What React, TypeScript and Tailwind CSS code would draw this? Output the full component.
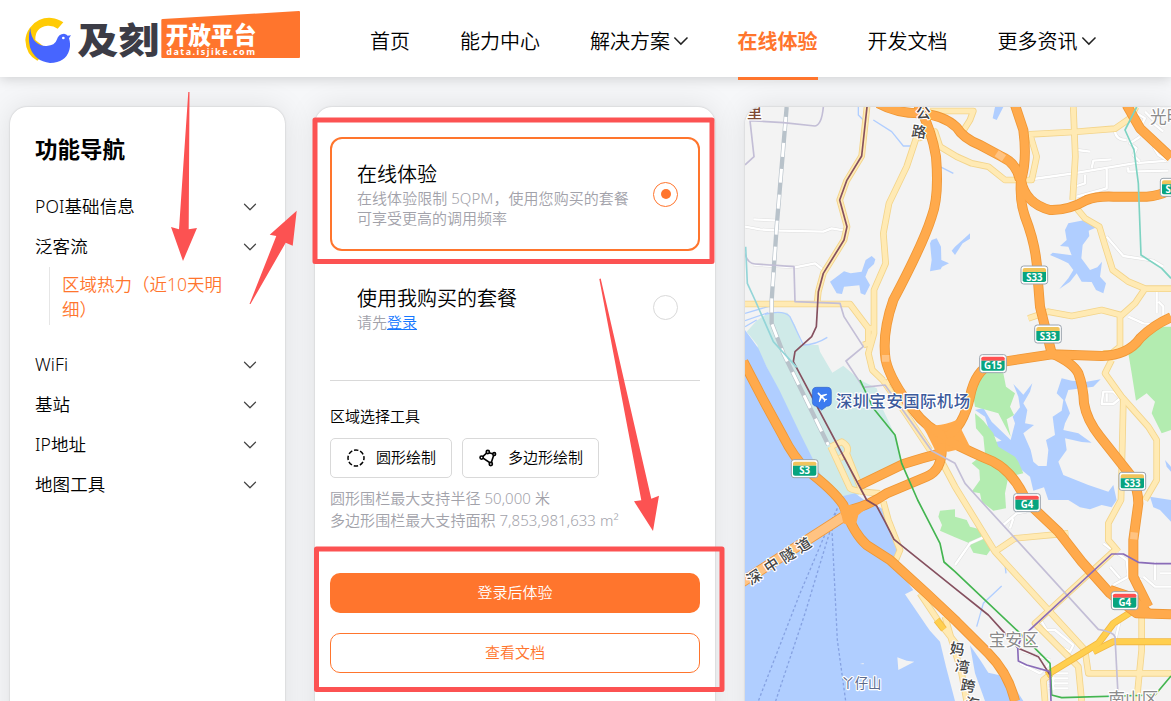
import { ChevronDown } from "lucide-react";

const NAV_ITEMS = [
  { label: "首页" },
  { label: "能力中心" },
  { label: "解决方案", menu: true },
  { label: "在线体验", active: true },
  { label: "开发文档" },
  { label: "更多资讯", menu: true },
];

const SIDE_ITEMS = [
  { label: "POI基础信息" },
  { label: "泛客流", child: "区域热力（近10天明细）" },
  { label: "WiFi" },
  { label: "基站" },
  { label: "IP地址" },
  { label: "地图工具" },
];

const WATER = [
  "M15 690L55 745L80 800L118 870L180 1000L250 1140L300 1190L345 1180L380 1205L425 1225L445 1280L472 1335L476 1365L460 1390L520 1470L495 1483L560 1578L570 1592L600 1625L618 1700L645 1803H15Z",
  "M690 1636L722 1682L745 1718L790 1728L835 1780L850 1803H735L705 1720Z",
  "M270 545L312 514L332 520L365 515L377 480L395 468L406 478L402 492L385 508L376 530L390 555L375 585L362 580L358 556L312 560L306 582L290 580Z",
  "M570 430L575 420L590 415L603 440L604 480L627 490L606 500L602 508L570 514L575 480Z",
  "M645 440L690 400L690 416L668 430L645 465L635 452Z",
  "M765 21H790L770 60L758 55Z",
  "M985 370L1035 360L1073 380L1046 392L1048 408L1028 435L1024 475L1050 510L1072 502L1086 485L1080 530L1098 550L1090 580L1068 570L1055 546L1025 545L1010 520L990 545L958 567L985 535L1000 510L985 490L960 478L930 465L938 458L995 466L985 440L960 438L980 420L975 390Z",
  "M705 930L730 924L755 965L812 1020L825 970L818 950L840 922L835 890L820 852L850 884L877 850L870 875L850 910L862 930L855 970L882 975L850 1000L872 1050L880 1085L895 1098L920 1098L925 1050L918 1020L945 1005L938 950L965 932L970 900L950 880L965 835L995 842L1040 845L1082 838L1060 860L985 870L975 900L990 940L975 970L970 990L1015 1000L1055 1028L1025 1026L975 1015L980 1050L955 1085L970 1125L1045 1155L1105 1175L1120 1155L1130 1200L1115 1222L1085 1215L1050 1228L1020 1222L985 1200L925 1200L912 1162L880 1172L870 1130L845 1110L815 1075L770 1045L750 1030L785 1022L750 1000L735 950Z",
  "M1230 1190L1293 1200V1265L1260 1230L1240 1222Z",
  "M1275 1080L1293 1100V1115L1280 1100Z",
];

const PARKS = [
  "M710 850L735 815L790 820L798 860L825 880L810 920L822 945L800 958L812 1010L775 940L748 932L705 920L700 890Z",
  "M705 940L730 962L760 1000L775 1040L825 1070L835 1085L850 1120L805 1130L795 1180L798 1225L760 1232L725 1205L720 1180L695 1175L720 1140L718 1110L695 1090L735 1060L730 1010L708 985Z",
  "M1293 680H1245L1205 705L1165 760L1175 820L1188 902L1220 880L1245 905L1235 940L1265 1000L1293 990Z",
  "M600 1232L645 1228L645 1250L680 1260L690 1280L720 1288L725 1310L755 1345L740 1366L700 1358L685 1328L645 1312L600 1292L606 1275L595 1250Z",
];

const LOCAL_ROADS = [
  "M40 358L115 362M15 380L60 388L120 392L250 395L275 385L315 392M40 494L165 502L225 490L250 510",
  "M880 237L1000 220L1180 190L1285 182M1012 150L1050 155M1055 205L1060 182L1115 178M1100 205V265L1010 290M1035 225V250L1010 258M1125 90Q1125 120 1160 120M1160 205H1165V215L1285 212",
  "M1200 110L1170 130L1190 145L1180 165L1200 185M1240 140L1255 165L1285 182M1190 40L1215 55L1205 75M1255 45L1240 70L1270 95M1215 35L1240 60",
  "M1100 410L1150 468L1240 482L1270 500M1250 570V640M1165 650L1210 670L1240 672M1255 605L1270 620V645",
  "M1090 875H1120L1140 895L1120 912H1085ZM1100 880V905",
  "M645 1395L690 1330L735 1310M790 1275L830 1240L860 1235M810 1285L820 1255",
  "M905 1565L920 1590L945 1590L1000 1635L990 1655L960 1640L930 1605M925 1720H985M925 1735H985M925 1750H985M925 1765H985M940 1700V1770",
  "M1090 1330L1110 1345L1160 1380L1165 1430L1120 1455M1110 1400L1140 1435M1245 1385V1440M1210 1430L1245 1460H1293M1260 1420H1293M1160 1420L1205 1440",
  "M850 1655L930 1680M840 1690L900 1720L930 1690M1140 1560L1125 1625M1000 1680L1020 1660",
];

const YELLOW_ROADS = [
  "M381 21L365 168L320 242L299 300L321 380L312 420L250 520L235 575L231 612",
  "M530 110L500 200L447 310L430 400L437 490L402 570V700L385 760L397 810L430 842",
  "M535 115L585 95L600 140L650 170L695 190L745 200L795 240L875 240L890 170L870 103L1000 96L1125 86L1170 55L1188 21",
  "M570 33H700L690 60L665 100",
  "M1000 21L1006 170L998 300",
  "M1010 325L1035 355L1078 380L1093 430L1118 510L1165 545L1215 566H1293",
  "M1215 566L1185 610L1145 646L1085 630L995 648L925 635L865 655",
  "M1140 650V740L1115 760H1090",
  "M1115 780L1095 820L1145 890L1225 980L1250 1020V1140L1215 1200",
  "M1150 900L1143 1200L1105 1270V1320L1135 1355",
  "M1125 1350L885 1570L1015 1700L1025 1803",
  "M600 1075L645 1160L765 1355L925 1530L1035 1650L1045 1720H1293",
  "M765 1355L825 1315L985 1300",
  "M1205 1530V1650L1190 1803",
  "M915 1803L910 1740L935 1720",
  "M15 612H330L385 685V730L370 735M380 685H402",
  "M430 842L500 945L570 1050M470 830L440 850",
  "M272 1040L305 1025Q330 1040 320 1060L300 1075M272 1040L330 1165Q345 1175 420 1180M320 1060L362 1165",
  "M430 1205L445 1260L480 1350L463 1390",
  "M540 1480L600 1570L655 1640M615 1550L635 1620L665 1720L680 1803",
];

const GOLD_ROADS = [
  "M920 1725L1075 1630L1120 1570L1175 1535",
  "M1060 1655L1120 1625H1293",
  "M590 1560L612 1588",
];

const HIGHWAYS = [
  "M415 10Q470 40 540 40Q610 45 650 82Q670 115 720 135L785 170Q830 190 840 240",
  "M535 15Q575 90 588 170Q598 290 575 350Q550 430 460 600Q425 700 437 780Q450 840 520 930Q560 985 620 1010",
  "M620 1010Q670 980 690 890Q705 810 759 790L935 763L1085 768Q1165 765 1200 715Q1240 675 1293 652",
  "M825 15L850 90Q862 180 843 240Q838 300 855 350Q890 440 892 520L900 620L935 760Q1000 790 1015 820Q1030 860 1032 910Q1040 960 1080 1010L1175 1130Q1195 1170 1195 1210L1180 1320V1430L1225 1520",
  "M843 240Q855 310 930 330Q985 332 1040 300Q1070 288 1120 290H1220Q1260 288 1293 268",
  "M1160 15L1200 85L1293 172",
  "M620 1020Q700 1060 760 1085Q820 1115 860 1205L955 1295L1025 1385L1110 1480L1190 1540L1293 1543",
  "M10 785L70 900L130 1010Q160 1070 200 1110Q280 1170 310 1215Q340 1300 380 1335L450 1380L560 1480L650 1565L745 1660Q805 1720 825 1803",
  "M600 1060Q560 1070 490 1092L360 1155",
  "M605 1030Q610 1110 560 1130L440 1180Q390 1215 330 1230",
  "M1110 1470L1170 1490L1225 1540",
];

const METRO = [
  {
    color: "stroke-[#85505f]",
    d: "M381 21L365 168L320 242L299 300L321 380L312 420L250 520L235 575L229 680L215 710L165 755L160 785L380 1200L410 1218L435 1265L462 1318L645 1465L745 1545L795 1600L835 1645L895 1670L930 1725",
  },
  {
    color: "stroke-[#43b550]",
    d: "M360 840L400 925L465 1005L485 1090L533 1200L600 1330L612 1386L645 1415L835 1595L930 1690L935 1785L965 1793L1245 1785L1293 1728",
  },
  {
    color: "stroke-[#8a6cb8]",
    d: "M933 1803L930 1715L860 1695L835 1683L833 1640L845 1612L1115 1362H1150L1195 1387L1245 1391H1293",
  },
  {
    color: "stroke-[#7dd3c2]",
    d: "M1190 21L1155 90L1182 150L1195 250L1203 465L1265 505L1293 535",
  },
  { color: "stroke-[#94d5d8]", d: "M17 440L22 550L45 600L100 725L170 802" },
];

const BORDERS = [
  "M250 21Q245 75 225 78L130 68L30 62L42 170L15 195",
  "M15 460Q22 490 45 492L162 500L165 605L300 610L312 650L370 740L318 783L370 862L435 855L575 1052L645 1090L675 1150L720 1200L1075 1588Q1120 1595 1125 1610L1135 1803",
];

const RAILWAY = "M140 21L110 380L95 600V670L130 760L265 1035";

const SHIELDS = [
  { x: 883, y: 525, text: "S33", top: "#f0c45c" },
  { x: 924, y: 702, text: "S33", top: "#f0c45c" },
  { x: 759, y: 791, text: "G15", top: "#ff5050" },
  { x: 1177, y: 1144, text: "S33", top: "#f0c45c" },
  { x: 861, y: 1208, text: "G4", top: "#ff5050" },
  { x: 1154, y: 1502, text: "G4", top: "#ff5050" },
  { x: 194, y: 1106, text: "S3", top: "#f0c45c" },
  { x: 1301, y: 262, text: "S33", top: "#f0c45c" },
];

const BRIDGE_LABEL = [
  { char: "深", x: 43, y: 1432 },
  { char: "中", x: 95, y: 1396 },
  { char: "隧", x: 144, y: 1367 },
  { char: "道", x: 192, y: 1336 },
];

const CROSSING_LABEL = [
  { char: "妈", x: 652, y: 1648 },
  { char: "湾", x: 667, y: 1701 },
  { char: "跨", x: 684, y: 1758 },
  { char: "海", x: 697, y: 1812 },
];

function Logo() {
  return (
    <svg viewBox="72 24 831 174" className="h-[58px] w-[277px]">
      <path
        d="M190 67A72 72 0 0 0 76 120Q78 165 112 182L145 150L106 120Q104 82 143 77Q160 76 173 86Z"
        fill="#ffcb05"
      />
      <path
        d="M91 84Q92 112 108 127Q121 139 140 138Q165 136 170 120Q176 101 192 101Q200 102 203 107L213 106L207 115Q213 133 208 150Q197 188 150 189Q104 184 90 142Q83 112 91 84Z"
        fill="#4765ff"
      />
      <circle cx="190" cy="114" r="4" fill="#fff" />
      <text
        x="232"
        y="163"
        textLength="246"
        lengthAdjust="spacingAndGlyphs"
        className="fill-[#3c3c46] text-[108px] font-black"
      >
        及刻
      </text>
      <path d="M484 60Q484 57 488 57L897 33Q900 33 900 36V171Q900 174 897 174H487Q484 174 484 171Z" fill="#ff752d" />
      <text
        x="497"
        y="131"
        textLength="272"
        lengthAdjust="spacingAndGlyphs"
        className="fill-white text-[70px] font-black"
      >
        开放平台
      </text>
      <text
        x="499"
        y="166"
        textLength="266"
        className="fill-white text-[27px] font-bold"
      >
        data.isjike.com
      </text>
    </svg>
  );
}

function Header() {
  return (
    <header className="relative z-10 flex h-[77px] shrink-0 bg-white shadow-[0_2px_12px_rgba(0,0,0,0.16)]">
      <div className="ml-6 mt-2 w-[346px] shrink-0">
        <Logo />
      </div>
      <nav className="flex h-20 gap-[50px]">
        {NAV_ITEMS.map((item) => (
          <a
            key={item.label}
            className={`flex items-center whitespace-nowrap border-b-[3px] pt-1.5 text-[20px] leading-none ${
              item.active
                ? "border-[#ff752d] font-bold text-[#ff752d]"
                : "border-transparent text-black"
            }`}
          >
            {item.label}
            {item.menu && (
              <svg
                viewBox="0 0 18 16"
                className="mb-0.5 h-4 w-[17.5px] overflow-visible fill-none stroke-[#222] stroke-[1.5]"
              >
                <path d="M4.5 4.5L11.2 11.2L18 4.5" />
              </svg>
            )}
          </a>
        ))}
      </nav>
    </header>
  );
}

function Sidebar() {
  return (
    <aside className="h-[700px] w-[275px] shrink-0 rounded-[17px] bg-white px-[25px] pt-[26px] shadow-[0_0_30px_rgba(0,0,0,0.1),0_0_2px_rgba(0,0,0,0.2)]">
      <h2 className="mb-5 text-[22.5px] font-bold leading-[34px]">功能导航</h2>
      {SIDE_ITEMS.map((item) => (
        <div key={item.label}>
          <div className="-mr-px flex h-10 items-center justify-between pb-px text-[17.5px] tracking-[0.1px]">
            <span>{item.label}</span>
            <ChevronDown size={22} strokeWidth={1.3} className="text-[#444]" />
          </div>
          {item.child && (
            <div className="mb-5 ml-3.5 h-[58px] w-[184px] border-l border-[#e6e6e6] pl-3 pt-[5px] text-[17.5px] leading-[25px] text-[#ff752d]">
              {item.child}
            </div>
          )}
        </div>
      ))}
    </aside>
  );
}

function CircleIcon() {
  return (
    <svg viewBox="0 0 18 18" className="size-[18px] fill-none stroke-black stroke-[1.5]">
      <circle cx="9" cy="9" r="8" strokeDasharray="4.4 1.88" strokeDashoffset="2.2" />
    </svg>
  );
}

function PolygonIcon() {
  return (
    <svg viewBox="0 0 18 18" className="size-[18px] fill-white stroke-black stroke-[1.6]">
      <path d="M8.5 3.2L15 5.2L12 14.5L3 8.5Z" />
      <circle cx="8.8" cy="3" r="1.6" />
      <circle cx="15.2" cy="5" r="1.4" />
      <circle cx="11.8" cy="15" r="1.6" />
      <circle cx="2.6" cy="8.6" r="1.6" />
    </svg>
  );
}

function ToolPanel() {
  return (
    <main className="h-[700px] w-[400px] shrink-0 rounded-[17px] bg-white px-[15px] pt-[30px] shadow-[0_0_30px_rgba(0,0,0,0.1),0_0_2px_rgba(0,0,0,0.2)]">
      <div className="flex h-[114px] items-center justify-between rounded-xl border-2 border-[#ff752d] pl-[25px] pr-5">
        <div>
          <h3 className="pt-0.5 text-[20px] leading-[26px]">在线体验</h3>
          <p className="w-[276px] text-[15px] leading-5 text-[#a2a2aa]">
            <span className="whitespace-nowrap tracking-[0.05px]">
              在线体验限制 5QPM，使用您购买的套餐
            </span>
            <br />
            可享受更高的调用频率
          </p>
        </div>
        <span className="flex size-[25px] items-center justify-center rounded-full border border-[#ff752d]">
          <span className="size-[10px] rounded-full bg-[#ff752d]" />
        </span>
      </div>
      <div className="flex h-[113px] items-center justify-between pl-[27px] pr-[22px]">
        <div>
          <h3 className="pt-0.5 text-[20px] leading-[26px]">使用我购买的套餐</h3>
          <p className="text-[15px] leading-5 text-[#a2a2aa]">
            请先<a className="text-[#1677ff] underline">登录</a>
          </p>
        </div>
        <span className="size-[25px] rounded-full border border-[#d9d9d9]" />
      </div>
      <div className="mt-4 border-b border-[#d9d9d9]" />
      <p className="mt-[23px] text-[15px] leading-6">区域选择工具</p>
      <div className="mt-2.5 flex gap-2.5">
        <button className="flex h-10 w-[122px] items-center rounded-[5px] border border-[#d9d9d9] pl-4 text-[15px]">
          <CircleIcon />
          <span className="ml-[11px] pb-0.5">圆形绘制</span>
        </button>
        <button className="flex h-10 w-[137px] items-center rounded-[5px] border border-[#d9d9d9] pl-4 text-[15px]">
          <PolygonIcon />
          <span className="ml-[11px] pb-0.5">多边形绘制</span>
        </button>
      </div>
      <p className="mt-[9px] text-[15px] leading-[22px] tracking-[0.05px] text-[#a2a2aa]">
        圆形围栏最大支持半径 50,000 米
        <br />
        多边形围栏最大支持面积 7,853,981,633 m²
      </p>
      <button className="mt-[42px] h-10 w-full rounded-[10px] bg-[#ff752d] pb-0.5 text-[15px] text-white">
        登录后体验
      </button>
      <button className="mt-5 h-10 w-full rounded-[10px] border border-[#ff752d] pb-0.5 text-[15px] text-[#ff752d]">
        查看文档
      </button>
    </main>
  );
}

function Shield({ x, y, text, top }: { x: number; y: number; text: string; top: string }) {
  return (
    <g transform={`translate(${x} ${y})`}>
      <rect x="-40" y="-27" width="80" height="54" rx="8" fill="#fff" stroke="#9aa3ad" strokeWidth="3" />
      <path d="M-35 -16Q-35 -21 -29 -21H29Q35 -21 35 -16V-9H-35Z" fill={top} />
      <path d="M-35 -9H35V16Q35 21 29 21H-29Q-35 21 -35 16Z" fill="#07a47f" />
      <text y="17" textAnchor="middle" className="fill-white text-[29px] font-bold">
        {text}
      </text>
    </g>
  );
}

function CityMap() {
  return (
    <svg
      viewBox="15 21 1278 1782"
      className="block h-[594px] w-[426px] bg-[#f3f3f3] fill-none font-normal"
      strokeLinejoin="round"
    >
      <path
        d="M20 695L50 662L75 645L110 636L142 638L165 675L185 735L235 735L240 755L277 818L310 797L360 840L410 865L425 920L465 1005L485 1085L500 1100L380 1160L350 1190L310 1200L250 1150L120 880L55 752L52 735Z"
        fill="#cfeae8"
      />
      {WATER.map((d) => (
        <path key={d} d={d} fill="#b0ceff" />
      ))}
      <path
        d="M15 640L90 618M15 662L85 638M15 680L50 660M75 643Q130 628 150 650L190 735Q225 735 262 712M355 21V45L375 65M400 60L455 95L490 138L515 138M600 200L640 220M710 1580L730 1510L785 1458M793 1375L798 1420"
        stroke="#b0ceff"
        strokeWidth="4"
      />
      {PARKS.map((d) => (
        <path key={d} d={d} fill="#b3ecb0" />
      ))}
      <path d="M472 1672L500 1682L523 1685L475 1710ZM360 1692L371 1689V1693Z" fill="#f3f3f3" />
      <path
        d="M292 1225L265 1280L180 1480L55 1803M292 1225L268 1300L195 1540L107 1803M275 1270L292 1620L317 1803"
        stroke="#86a2e2"
        strokeWidth="4"
        strokeDasharray="8 7"
      />

      {LOCAL_ROADS.map((d) => (
        <g key={d}>
          <path d={d} stroke="#dedede" strokeWidth="10" />
          <path d={d} stroke="#fff" strokeWidth="7" />
        </g>
      ))}

      {YELLOW_ROADS.map((d) => (
        <path key={d} d={d} stroke="#f3d48a" strokeWidth="20" />
      ))}
      {YELLOW_ROADS.map((d) => (
        <path key={d} d={d} stroke="#ffeab4" strokeWidth="15" />
      ))}
      {GOLD_ROADS.map((d) => (
        <path key={d} d={d} stroke="#f2b843" strokeWidth="21" />
      ))}
      {GOLD_ROADS.map((d) => (
        <path key={d} d={d} stroke="#ffcf4f" strokeWidth="16" />
      ))}
      <path d="M310 1250L170 1340L0 1450" stroke="#f0993a" strokeWidth="32" />
      <path d="M310 1250L170 1340L0 1450" stroke="#ffc382" strokeWidth="27" />
      {HIGHWAYS.map((d) => (
        <path key={d} d={d} stroke="#ef9735" strokeWidth="30" />
      ))}
      <path d="M520 930L580 975Q610 978 650 960L690 1040L625 1055L585 1050L560 1000Z" fill="#ffaa4c" />
      <path d="M292 1190L320 1215L360 1215L410 1200L355 1245L345 1285L310 1270Z" fill="#ffaa4c" />
      {HIGHWAYS.map((d) => (
        <path key={d} d={d} stroke="#ffaa4c" strokeWidth="25" />
      ))}
      <path d="M770 160L792 175M437 765V785M1183 1297L1181 1318" stroke="#ffc382" strokeWidth="22" />

      <path d={RAILWAY} stroke="#b8c2ca" strokeWidth="13" />
      <path
        d={RAILWAY}
        stroke="#fff"
        strokeWidth="9"
        strokeDasharray="42 36"
        strokeDashoffset="-30"
      />
      {BORDERS.map((d) => (
        <path key={d} d={d} stroke="#c3bed6" strokeWidth="5" />
      ))}
      {METRO.map((line) => (
        <path key={line.d} d={line.d} className={line.color} strokeWidth="5" />
      ))}

      {SHIELDS.map((shield) => (
        <Shield key={`${shield.x}-${shield.y}`} {...shield} />
      ))}

      <path
        d="M230 862H262Q274 862 274 875V905Q274 918 260 919L245 930L230 919Q217 918 217 905V875Q217 862 230 862Z"
        fill="#3c7bf0"
        stroke="#2f63c8"
        strokeWidth="2"
      />
      <path
        transform="translate(246 890) rotate(-45) scale(1.7) translate(-12 -12)"
        d="M21 16v-2l-8-5V3.5c0-.83-.67-1.5-1.5-1.5S10 2.67 10 3.5V9l-8 5v2l8-2.5V19l-2 1.5V22l3.5-1 3.5 1v-1.5L13 19v-5.5l8 2.5z"
        fill="#fff"
      />

      <g className="stroke-white stroke-[7] [paint-order:stroke]">
        <text x="288" y="921" textLength="402" className="fill-[#3c5a9c] text-[49px] font-medium">
          深圳宝安国际机场
        </text>
        <text x="21" y="55" className="fill-[#7d4a32] text-[45px] font-medium">
          里
        </text>
        <text x="1230" y="70" className="fill-[#8b8b8b] text-[50px]">
          光明
        </text>
        <text x="746" y="1638" className="fill-[#8b8b8b] text-[50px]">
          宝安区
        </text>
        <text x="1105" y="1814" className="fill-[#8b8b8b] text-[50px]">
          南山区
        </text>
        <text x="304" y="1765" className="fill-[#5d6b8c] text-[40px]">
          丫仔山
        </text>
        <g textAnchor="middle" className="fill-[#444] text-[44px] font-medium">
          <text x="550" y="55">
            公
          </text>
          <text x="537" y="111" transform="rotate(8 537 95)">
            路
          </text>
          {BRIDGE_LABEL.map(({ char, x, y }) => (
            <text key={char} x={x} y={y + 15} transform={`rotate(-33 ${x} ${y})`}>
              {char}
            </text>
          ))}
          {CROSSING_LABEL.map(({ char, x, y }) => (
            <text key={char} x={x} y={y + 15} transform={`rotate(8 ${x} ${y})`}>
              {char}
            </text>
          ))}
        </g>
      </g>
    </svg>
  );
}

// Red guide marks drawn on top of the page
function Annotations() {
  return (
    <svg
      viewBox="0 0 1171 701"
      className="pointer-events-none absolute inset-0 z-20 h-[701px] w-[1171px] fill-none"
    >
      <g stroke="#fc5252" strokeWidth="5" strokeLinejoin="round">
        <rect x="315" y="120" width="397" height="141.5" />
        <rect x="316.5" y="549" width="405.5" height="140.5" />
      </g>
      <g fill="#fc5252">
        <path d="M188.3 92H189.5L188.7 229.3L197 228L183 261L171 227L179 229.3Z" />
        <path d="M249.5 304L276.3 236L269.7 234.7L296.7 210.7L292.7 245.7L285.7 242.7L250.5 304Z" />
        <path d="M599.3 279L600.7 278.5L651.3 498.7L659 495.7L653 531L634 501.3L641.3 500.3Z" />
      </g>
    </svg>
  );
}

export default function App() {
  return (
    <div className="relative flex h-[701px] w-[1171px] flex-col overflow-hidden bg-[#f6f7f9] font-['Noto_Sans','Noto_Sans_CJK_SC',sans-serif] font-[350] text-black">
      <Header />
      <div className="flex gap-[30px] pl-2.5 pt-[30px]">
        <Sidebar />
        <ToolPanel />
        <section className="h-[700px] w-[426px] shrink-0 overflow-hidden rounded-tl-[17px] shadow-[0_0_30px_rgba(0,0,0,0.1),0_0_2px_rgba(0,0,0,0.2)]">
          <CityMap />
        </section>
      </div>
      <Annotations />
    </div>
  );
}
